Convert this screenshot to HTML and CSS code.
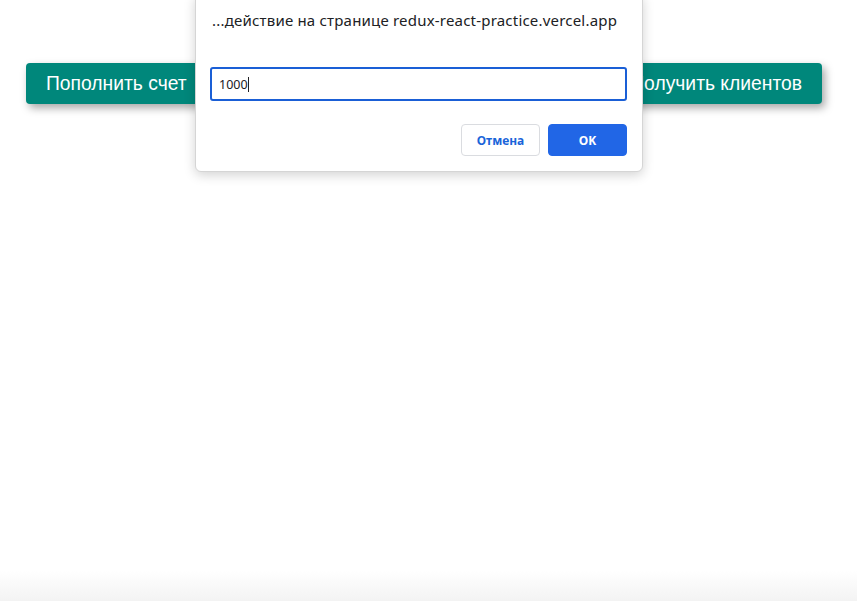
FILE: index.html
```html
<!DOCTYPE html>
<html lang="ru">
<head>
<meta charset="utf-8">
<title>redux-react-practice</title>
<link rel="stylesheet" href="styles.css">
</head>
<body>
<div class="app">
  <div class="toolbar">
    <button class="btn">Пополнить счет</button>
    <button class="btn">Получить клиентов</button>
  </div>
</div>
<div class="dialog">
  <p class="dialog-title">...действие на странице redux-react-practice.vercel.app</p>
  <div class="field"><span class="field-text">1000</span><span class="caret"></span></div>
  <div class="actions">
    <button class="dbtn cancel">Отмена</button>
    <button class="dbtn ok">OK</button>
  </div>
</div>
<div class="bottom-fade"></div>
</body>
</html>
```

FILE: styles.css
```css
html, body {
  margin: 0;
  padding: 0;
  background: #ffffff;
  height: 100%;
  overflow: hidden;
}
body {
  font-family: "Liberation Sans", Arial, sans-serif;
}
.app {
  padding: 63px 35px 0 26px;
}
.toolbar {
  display: flex;
  justify-content: space-between;
}
.btn {
  height: 41px;
  padding: 0 20px;
  border: none;
  border-radius: 4px;
  background: #00877b;
  color: #ffffff;
  font-family: "Liberation Sans", Arial, sans-serif;
  font-size: 19.3px;
  box-shadow: 3px 4px 8px rgba(0, 0, 0, 0.35);
}
.dialog {
  position: absolute;
  left: 195px;
  top: -6px;
  width: 417px;
  padding: 15px 15px 15px 14px;
  background: #ffffff;
  border: 1px solid #d5d5d5;
  border-radius: 6px;
  box-shadow: 0 3px 12px rgba(0, 0, 0, 0.18);
  font-family: "Noto Sans", "Liberation Sans", Arial, sans-serif;
}
.dialog-title {
  margin: 0;
  padding-left: 2px;
  font-size: 15px;
  letter-spacing: 0.2px;
  line-height: 20px;
  color: #202124;
}
.field {
  margin-top: 37px;
  height: 30px;
  border: 2px solid #1a5fd6;
  border-radius: 3px;
  display: flex;
  align-items: center;
  padding-left: 7px;
}
.field-text {
  font-size: 12.5px;
  color: #202124;
}
.caret {
  display: inline-block;
  width: 1px;
  height: 15px;
  background: #202124;
}
.actions {
  display: flex;
  justify-content: flex-end;
  gap: 8px;
  margin-top: 23px;
}
.dbtn {
  width: 79px;
  height: 32px;
  border-radius: 4px;
  font-family: "Noto Sans", "Liberation Sans", Arial, sans-serif;
  font-size: 12px;
  font-weight: bold;
}
.cancel {
  background: #ffffff;
  border: 1px solid #dadce0;
  color: #1a64d9;
}
.ok {
  background: #2166e6;
  border: 1px solid #2166e6;
  color: #ffffff;
}
.bottom-fade {
  position: fixed;
  left: 0;
  right: 0;
  bottom: 0;
  height: 30px;
  background: linear-gradient(#ffffff, #f3f3f3);
}
```
